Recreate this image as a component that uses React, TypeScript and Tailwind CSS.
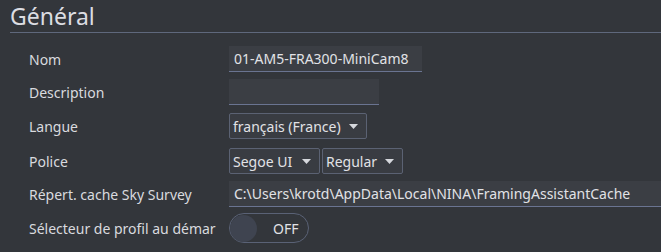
import { ReactNode } from "react"

const font = { fontFamily: '"Noto Sans", "Open Sans", sans-serif' }

function Caret() {
  return (
    <svg width="9" height="5" viewBox="0 0 9 5" className="shrink-0">
      <path d="M0 0 H9 L4.5 5 Z" fill="#d6d8dd" />
    </svg>
  )
}

function Row({ label, children, className = "" }: { label: string; children: ReactNode; className?: string }) {
  return (
    <div className={`flex items-center ${className}`}>
      <div className="mr-[13px] w-[216px] shrink-0 overflow-hidden whitespace-nowrap pl-[29px] text-[14px] text-[#d9dadf]">
        {label}
      </div>
      {children}
    </div>
  )
}

function TextBox({ value, className = "" }: { value?: string; className?: string }) {
  return (
    <div
      className={`flex h-[26px] items-center border-b border-[#6a7491] bg-[#3b3e44] px-[5px] text-[14px] text-[#e1e2e6] ${className}`}
    >
      {value}
    </div>
  )
}

function Combo({ value, className = "" }: { value: string; className?: string }) {
  return (
    <div
      className={`flex h-[26px] items-center justify-between rounded-[2px] border border-[#5b6273] bg-[#393c42] pl-[3px] pr-[8px] text-[14px] text-[#e1e2e6] ${className}`}
    >
      <span className="whitespace-nowrap">{value}</span>
      <Caret />
    </div>
  )
}

export default function App() {
  return (
    <div className="h-[252px] w-[661px] overflow-hidden bg-[#33363b]" style={font}>
      <div className="ml-[10px] border-b border-[#5f687c] pt-[2px] pb-[1px]">
        <h2 className="text-[23px] leading-[29px] text-[#dcdde2]">Général</h2>
      </div>

      <div className="flex flex-col">
        <Row label="Nom" className="mt-[13px]">
          <TextBox value="01-AM5-FRA300-MiniCam8" className="w-[193px]" />
        </Row>
        <Row label="Description" className="mt-[7px]">
          <TextBox className="w-[150px]" />
        </Row>
        <Row label="Langue" className="mt-[8px]">
          <Combo value="français (France)" className="w-[138px]" />
        </Row>
        <Row label="Police" className="mt-[9px]">
          <div className="flex gap-[2px]">
            <Combo value="Segoe UI" className="w-[91px]" />
            <Combo value="Regular" className="w-[81px]" />
          </div>
        </Row>
        <Row label="Répert. cache Sky Survey" className="mt-[7px]">
          <TextBox value="C:\Users\krotd\AppData\Local\NINA\FramingAssistantCache" className="flex-1" />
        </Row>
        <Row label="Sélecteur de profil au démarrage" className="mt-[6px]">
          <div className="flex h-[30px] w-[80px] items-center rounded-full border-[1.5px] border-[#5a6276]">
            <div className="h-[27px] w-[27px] rounded-full bg-[#3f4450]" />
            <span className="ml-[16px] text-[14px] text-[#e1e2e6]">OFF</span>
          </div>
        </Row>
      </div>
    </div>
  )
}
